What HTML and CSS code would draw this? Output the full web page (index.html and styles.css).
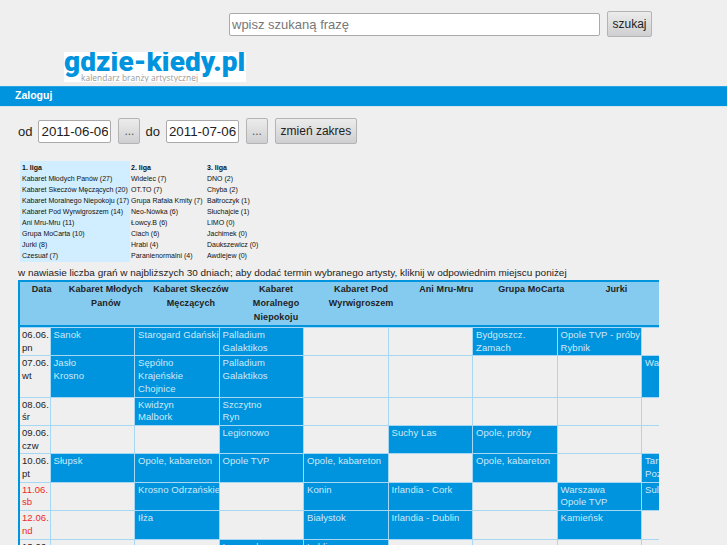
FILE: index.html
```html
<!DOCTYPE html>
<html lang="pl">
<head>
<meta charset="utf-8">
<title>gdzie-kiedy.pl</title>
<link rel="stylesheet" href="styles.css">
</head>
<body>
<div class="search">
  <input class="field search-field" type="text" value="wpisz szukaną frazę">
  <button class="btn">szukaj</button>
</div>
<div class="logo">
  <div class="logo-main">gdzie-kiedy.pl</div>
  <div class="logo-sub">kalendarz branży artystycznej</div>
</div>
<nav class="bar"><a>Zaloguj</a></nav>
<form class="range">
  <span>od</span>
  <input class="field date" type="text" value="2011-06-06">
  <button class="btn small" type="button">...</button>
  <span>do</span>
  <input class="field date" type="text" value="2011-07-06">
  <button class="btn small" type="button">...</button>
  <button class="btn change" type="button">zmień zakres</button>
</form>
<div class="leagues">
  <ul class="league first">
    <li class="lh">1. liga</li><li>Kabaret Młodych Panów (27)</li><li>Kabaret Skeczów Męczących (20)</li><li>Kabaret Moralnego Niepokoju (17)</li><li>Kabaret Pod Wyrwigroszem (14)</li><li>Ani Mru-Mru (11)</li><li>Grupa MoCarta (10)</li><li>Jurki (8)</li><li>Czesuaf (7)</li>
  </ul>
  <ul class="league second">
    <li class="lh">2. liga</li><li>Widelec (7)</li><li>OT.TO (7)</li><li>Grupa Rafała Kmity (7)</li><li>Neo-Nówka (6)</li><li>Łowcy.B (6)</li><li>Ciach (6)</li><li>Hrabi (4)</li><li>Paranienormalni (4)</li>
  </ul>
  <ul class="league third">
    <li class="lh">3. liga</li><li>DNO (2)</li><li>Chyba (2)</li><li>Bałtroczyk (1)</li><li>Słuchajcie (1)</li><li>LIMO (0)</li><li>Jachimek (0)</li><li>Daukszewicz (0)</li><li>Awdiejew (0)</li>
  </ul>
</div>
<p class="hint">w nawiasie liczba grań w najbliższych 30 dniach; aby dodać termin wybranego artysty, kliknij w odpowiednim miejscu poniżej</p>
<div class="cal-wrap">
<table class="cal-head">
  <colgroup><col class="h-date"><col class="c"><col class="c"><col class="c"><col class="c"><col class="c"><col class="c"><col class="c"></colgroup>
  <thead><tr><th>Data</th><th>Kabaret Młodych Panów</th><th>Kabaret Skeczów Męczących</th><th>Kabaret<br>Moralnego Niepokoju</th><th>Kabaret Pod Wyrwigroszem</th><th>Ani Mru-Mru</th><th>Grupa MoCarta</th><th>Jurki</th></tr></thead>
</table>
<table class="cal">
  <colgroup><col class="c-date"><col class="c"><col class="c"><col class="c"><col class="c"><col class="c"><col class="c"><col class="c"><col class="c"></colgroup>
  <tbody>
    <tr><td class="d">06.06.<br>pn</td><td class="on">Sanok</td><td class="on">Starogard Gdański</td><td class="on">Palladium<br>Galaktikos</td><td></td><td></td><td class="on">Bydgoszcz.<br>Zamach</td><td class="on">Opole TVP - próby<br>Rybnik</td><td></td></tr>
    <tr><td class="d">07.06.<br>wt</td><td class="on">Jasło<br>Krosno</td><td class="on">Sępólno<br>Krajeńskie<br>Chojnice</td><td class="on">Palladium<br>Galaktikos</td><td></td><td></td><td></td><td></td><td class="on">Warszawa</td></tr>
    <tr><td class="d">08.06.<br>śr</td><td></td><td class="on">Kwidzyn<br>Malbork</td><td class="on">Szczytno<br>Ryn</td><td></td><td></td><td></td><td></td><td></td></tr>
    <tr><td class="d">09.06.<br>czw</td><td></td><td></td><td class="on">Legionowo</td><td></td><td class="on">Suchy Las</td><td class="on">Opole, próby</td><td></td><td></td></tr>
    <tr><td class="d">10.06.<br>pt</td><td class="on">Słupsk</td><td class="on">Opole, kabareton</td><td class="on">Opole TVP</td><td class="on">Opole, kabareton</td><td></td><td class="on">Opole, kabareton</td><td></td><td class="on">Tarnów<br>Poznań</td></tr>
    <tr><td class="d red">11.06.<br>sb</td><td></td><td class="on">Krosno Odrzańskie</td><td></td><td class="on">Konin</td><td class="on">Irlandia - Cork</td><td></td><td class="on">Warszawa<br>Opole TVP</td><td class="on">Sulechów</td></tr>
    <tr><td class="d red">12.06.<br>nd</td><td></td><td class="on">Iłża</td><td></td><td class="on">Białystok</td><td class="on">Irlandia - Dublin</td><td></td><td class="on">Kamieńsk</td><td></td></tr>
    <tr><td class="d">13.06.<br>pn</td><td></td><td></td><td class="on">Inowrocław</td><td class="on">Lublin</td><td></td><td></td><td></td><td></td></tr>
  </tbody>
</table>
</div>
</body>
</html>
```
FILE: styles.css
```css
html, body { margin: 0; height: 545px; overflow: hidden; }
body { background: #efefef; font-family: "Liberation Sans", Arial, sans-serif; color: #222; }
.search { display: flex; align-items: center; gap: 7px; padding: 11px 0 0 229px; height: 26px; }
.field { box-sizing: border-box; border: 1px solid #aaa; border-radius: 2px; background: #fff; font: 13.33px "Liberation Sans", Arial, sans-serif; color: #222; padding: 0 2px; height: 23px; outline: 0; }
.search-field { width: 371px; color: #777; font-size: 13px; }
.btn { box-sizing: border-box; border: 1px solid #b4b4b4; border-radius: 2px; background: linear-gradient(#ececec, #cfcfd1); font: 12px "Liberation Sans", Arial, sans-serif; color: #222; padding: 0; height: 26px; width: 45px; }
.logo { width: 182px; height: 30px; margin: 15px 0 0 64px; background: #fff; position: relative; overflow: hidden; }
.logo-main { font: 900 28px/20px Roboto, sans-serif; color: #0094de; letter-spacing: .1px; white-space: nowrap; }
.logo-sub { position: absolute; left: 17px; top: 21px; font: 8.3px/10px "Open Sans", sans-serif; color: #999; white-space: nowrap; letter-spacing: .1px; }
.bar { margin-top: 4px; height: 21px; background: #0094de; border-top: 1px solid #2aa5e3; border-bottom: 1px solid #d5e6ef; box-sizing: border-box; padding-left: 15px; }
.bar a { display: block; font: bold 10.5px/16px "Liberation Sans", Arial, sans-serif; color: #fff; }
.range { display: flex; align-items: center; height: 26px; margin: 11px 0 0 18px; font-size: 13px; }
.date { width: 73px; height: 23px; margin: 0 7px 0 6px; }
.small { width: 22px; height: 26px; margin-right: 5px; color: #555; }
.change { width: 82px; margin-left: 2px; }
.leagues { display: flex; margin: 17px 0 0 20px; }
.league { list-style: none; margin: 0; padding: 1px 0 0 2px; box-sizing: border-box; height: 101px; font-size: 7px; line-height: 11px; color: #111; white-space: nowrap; }
.first { width: 110px; background: #d0eeff; }
.second { width: 76px; padding-left: 1px; }
.third { padding-left: 1px; }
.lh { font-weight: bold; }
.hint { margin: 4px 0 0 18px; font-size: 9.96px; line-height: 13px; white-space: nowrap; color: #222; }
.cal-wrap { width: 639px; margin: 1px 0 0 18px; overflow: hidden; border-left: 2px solid #0094de; }
.cal-head { table-layout: fixed; border-collapse: collapse; width: 639px; background: #85cbf0; border-top: 2px solid #0094de; border-bottom: 2px solid #0094de; }
.h-date { width: 43px; }
.cal-head th { font-size: 9px; line-height: 14px; letter-spacing: .1px; padding: 0 2px 1px; vertical-align: top; color: #222; height: 42px; }
.cal { table-layout: fixed; border-collapse: collapse; width: 706px; }
.c-date { width: 30px; }
.c { width: 84.5px; }
.cal td { border: 1px solid #a6d8f4; font-size: 9.5px; line-height: 12.7px; letter-spacing: .08px; padding: 1px 3px; vertical-align: top; color: #222; white-space: nowrap; overflow: hidden; }
.cal td:first-child { border-left: 0; }
.cal td.on { background: #0094de; color: #cfe9f8; }
.cal td.d { padding: 1px 1px 1px 2px; }
.cal td.red { color: #f02828; }
```
